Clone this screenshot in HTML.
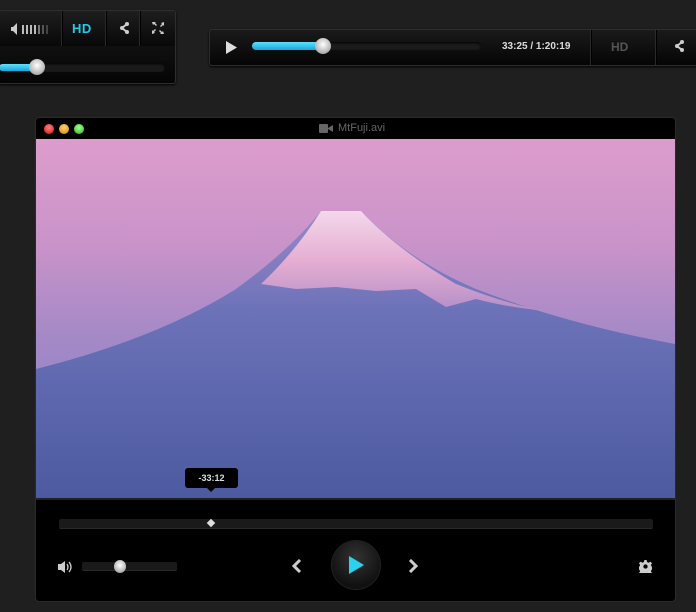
<!DOCTYPE html>
<html><head><style>
body{margin:0;width:696px;height:612px;background:#1f1f1f;position:relative;overflow:hidden;font-family:"Liberation Sans",sans-serif}
.w{position:absolute;background:linear-gradient(#1a1a1a,#050505);border:1px solid #2e2e2e;box-shadow:0 1px 2px #000}
.div{position:absolute;top:0;width:1px;background:#2a2a2a;border-right:1px solid #000}
.knob{position:absolute;border-radius:50%;background:radial-gradient(circle at 50% 40%,#fff,#bbb 60%,#888);}
</style></head><body>
<div class="w" style="left:-2px;top:10px;width:176px;height:72px;border-radius:3px">
 <div style="position:absolute;left:0;top:0;width:176px;height:35px;background:linear-gradient(#1e1e1e,#080808)"></div>
 <div class="div" style="left:62px;height:35px"></div>
 <div class="div" style="left:106px;height:35px"></div>
 <div class="div" style="left:140px;height:35px"></div>
 <svg style="position:absolute;left:12px;top:12px" width="42" height="12"><path d="M0 4h2l4-4v12l-4-4h-2z" fill="#ccc"/><g fill="#bbb"><rect x="11" y="2" width="2" height="9"/><rect x="15" y="2" width="2" height="9"/><rect x="19" y="2" width="2" height="9"/><rect x="23" y="2" width="2" height="9"/><rect x="27" y="2" width="2" height="9" fill="#777"/><rect x="31" y="2" width="2" height="9" fill="#555"/><rect x="35" y="2" width="2" height="9" fill="#444"/></g></svg>
 <div style="position:absolute;left:73px;top:10px;color:#29c8ea;font-weight:bold;font-size:13px;letter-spacing:.5px">HD</div>
 <svg style="position:absolute;left:120px;top:11px" width="10" height="12"><path d="M8 2L3 6l5 4" stroke="#ccc" stroke-width="2" fill="none"/><circle cx="8" cy="2" r="2" fill="#ccc"/><circle cx="3" cy="6" r="2" fill="#ccc"/><circle cx="8" cy="10" r="2" fill="#ccc"/></svg>
 <svg style="position:absolute;left:153px;top:11px" width="12" height="12" fill="#ccc"><path d="M0 0h4l-1 1 2 2-1 1-2-2-1 1zM12 0v4l-1-1-2 2-1-1 2-2-1-1zM0 12v-4l1 1 2-2 1 1-2 2 1 1zM12 12h-4l1-1-2-2 1-1 2 2 1-1z"/></svg>
 <div style="position:absolute;left:0;top:52px;width:166px;height:9px;background:#1a1a1a;border-radius:4px;box-shadow:inset 0 1px 2px #000"></div>
 <div style="position:absolute;left:0;top:53px;width:38px;height:7px;background:linear-gradient(#5fe0ff,#14a8d8);border-radius:4px"></div>
 <div class="knob" style="left:30px;top:48px;width:16px;height:16px"></div>
</div>
<div class="w" style="left:209px;top:29px;width:500px;height:35px;border-radius:3px">
 <svg style="position:absolute;left:16px;top:11px" width="12" height="13"><path d="M0 0l11 6.5L0 13z" fill="#ddd"/></svg>
 <div style="position:absolute;left:42px;top:12px;width:229px;height:8px;background:#1b1b1b;border-radius:4px;box-shadow:inset 0 1px 2px #000"></div>
 <div style="position:absolute;left:42px;top:12px;width:72px;height:8px;background:linear-gradient(#5fe0ff,#14a8d8);border-radius:4px"></div>
 <div class="knob" style="left:105px;top:8px;width:16px;height:16px"></div>
 <div style="position:absolute;left:292px;top:11px;color:#ddd;font-size:10px;font-weight:bold">33:25 / 1:20:19</div>
 <div class="div" style="left:380px;height:35px"></div>
 <div style="position:absolute;left:401px;top:10px;color:#555;font-weight:bold;font-size:12px">HD</div>
 <div class="div" style="left:445px;height:35px"></div>
 <svg style="position:absolute;left:464px;top:10px" width="10" height="12"><path d="M8 2L3 6l5 4" stroke="#ccc" stroke-width="2" fill="none"/><circle cx="8" cy="2" r="2" fill="#ccc"/><circle cx="3" cy="6" r="2" fill="#ccc"/><circle cx="8" cy="10" r="2" fill="#ccc"/></svg>
</div>
<div style="position:absolute;left:35px;top:117px;width:639px;height:483px;background:#000;border:1px solid #2a2a2a;border-radius:4px;overflow:hidden">
 <div style="position:absolute;left:8px;top:6px;width:10px;height:10px;border-radius:50%;background:radial-gradient(circle at 50% 35%,#ff8080,#d01010)"></div>
 <div style="position:absolute;left:23px;top:6px;width:10px;height:10px;border-radius:50%;background:radial-gradient(circle at 50% 35%,#ffd070,#d08a00)"></div>
 <div style="position:absolute;left:38px;top:6px;width:10px;height:10px;border-radius:50%;background:radial-gradient(circle at 50% 35%,#a0ff90,#30b020)"></div>
 <svg style="position:absolute;left:283px;top:6px" width="14" height="9" fill="#666"><rect width="9" height="9" rx="1"/><path d="M9 4l5-3v7l-5-3z"/></svg>
 <div style="position:absolute;left:302px;top:4px;color:#666;font-size:11px">MtFuji.avi</div>
 <svg style="position:absolute;left:0;top:21px" width="639" height="359">
  <defs>
   <linearGradient id="sky" x1="0" y1="0" x2="0" y2="1"><stop offset="0" stop-color="#dc9dcc"/><stop offset=".3" stop-color="#c993c9"/><stop offset=".55" stop-color="#a489c6"/><stop offset="1" stop-color="#8a84c4"/></linearGradient>
   <linearGradient id="mt" x1="0" y1="0" x2="0" y2="1"><stop offset="0" stop-color="#9a88c8"/><stop offset=".35" stop-color="#6c72b8"/><stop offset="1" stop-color="#4c5aa0"/></linearGradient>
   <linearGradient id="sn" x1="0" y1="0" x2="0" y2="1"><stop offset="0" stop-color="#f8dcec"/><stop offset=".5" stop-color="#eab0d4"/><stop offset="1" stop-color="#b890c8"/></linearGradient>
  </defs>
  <rect width="639" height="359" fill="url(#sky)"/>
  <path d="M0 230 Q120 200 200 150 Q255 110 285 72 L325 72 Q370 120 440 150 Q530 185 639 205 V359 H0z" fill="url(#mt)"/>
  <path d="M225 145 Q260 112 285 72 L325 72 Q360 110 420 145 Q470 165 510 172 Q470 168 440 160 L410 168 L380 150 L340 152 L300 148 L260 150z" fill="url(#sn)" opacity=".95"/>
 </svg>
 <div style="position:absolute;left:0;top:380px;width:639px;height:2px;background:#222"></div>
 <div style="position:absolute;left:149px;top:350px;width:53px;height:20px;background:#000;border-radius:3px;color:#ddd;font-size:9px;font-weight:bold;text-align:center;line-height:20px">-33:12</div>
 <div style="position:absolute;left:171px;top:370px;border:4px solid transparent;border-top-color:#000"></div>
 <div style="position:absolute;left:23px;top:401px;width:594px;height:9px;background:#1a1a1a;border-bottom:1px solid #2a2a2a;border-radius:2px"></div>
 <div style="position:absolute;left:172px;top:402px;width:6px;height:6px;background:#ddd;transform:rotate(45deg)"></div>
 <svg style="position:absolute;left:22px;top:443px" width="14" height="12" fill="#ccc"><path d="M0 3h3l4-3v12l-4-3h-3z"/><path d="M9 3q2 3 0 6M11 1q4 5 0 10" stroke="#ccc" stroke-width="1.3" fill="none"/></svg>
 <div style="position:absolute;left:46px;top:444px;width:95px;height:8px;background:#1a1a1a;border-bottom:1px solid #2a2a2a;border-radius:2px"></div>
 <div class="knob" style="left:78px;top:442px;width:12px;height:13px"></div>
 <svg style="position:absolute;left:256px;top:441px" width="10" height="14"><path d="M8 1L2 7l6 6" stroke="#ccc" stroke-width="3" fill="none"/></svg>
 <svg style="position:absolute;left:372px;top:441px" width="10" height="14"><path d="M2 1l6 6-6 6" stroke="#ccc" stroke-width="3" fill="none"/></svg>
 <div style="position:absolute;left:296px;top:423px;width:48px;height:48px;border-radius:50%;background:radial-gradient(circle at 50% 35%,#333,#111 70%);box-shadow:0 0 0 1px #222,0 2px 4px #000"></div>
 <svg style="position:absolute;left:313px;top:438px" width="16" height="18"><path d="M0 0l15 9L0 18z" fill="#2ad2f0"/></svg>
 <svg style="position:absolute;left:603px;top:442px" width="13" height="13" viewBox="0 0 24 24" fill="#ccc"><path d="M10 0h4l1 4 3 1 3-2 3 3-2 3 1 3 4 1v4l-4 1-1 3 2 3-3 3-3-2-3 1-1 4h-4l-1-4-3-1-3 2-3-3 2-3-1-3-4-1v-4l4-1 1-3-2-3 3-3 3 2 3-1z"/><circle cx="12" cy="12" r="4" fill="#000"/></svg>
</div>
</body></html>
